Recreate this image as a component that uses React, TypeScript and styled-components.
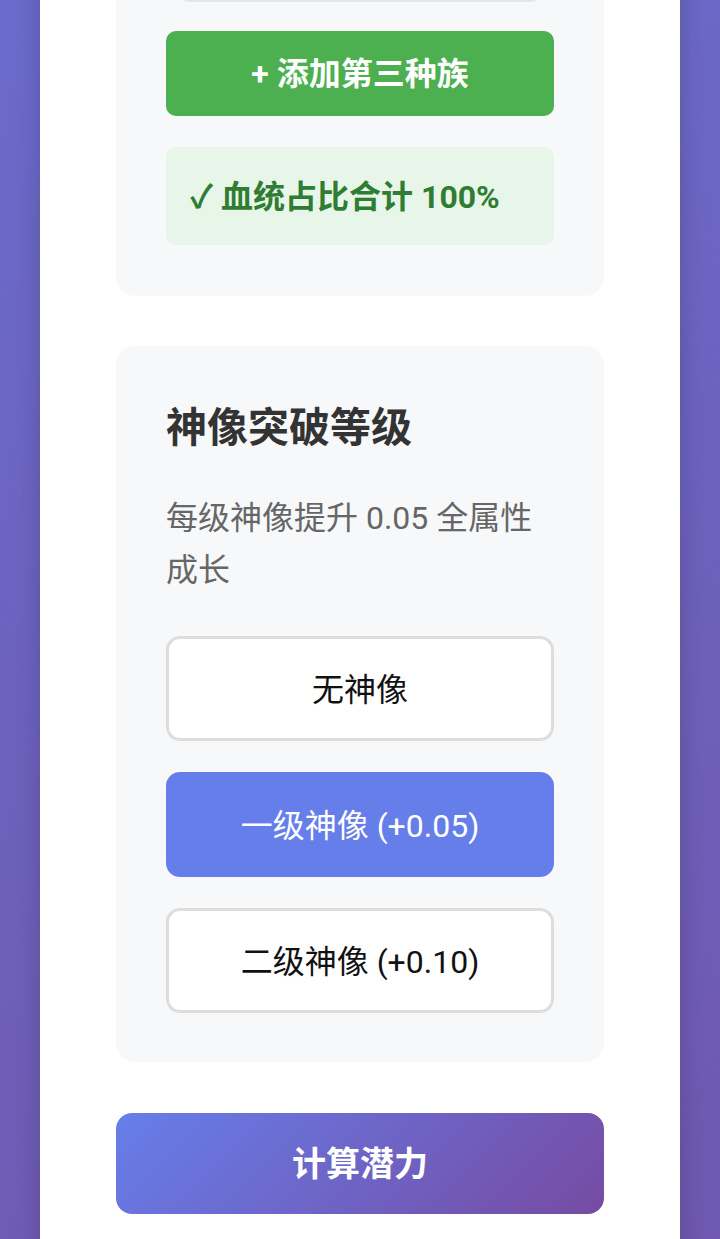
import styled, { createGlobalStyle } from "styled-components";

const GlobalStyle = createGlobalStyle`
  html, body {
    margin: 0;
    padding: 0;
  }
  body {
    min-height: 100vh;
    background: linear-gradient(160deg, #6a6bcb 0%, #7057ae 100%);
    font-family: Roboto, "Noto Sans CJK SC", sans-serif;
    overflow: hidden;
  }
`;

const Container = styled.div`
  width: 640px;
  margin: -120px auto 0;
  background: #ffffff;
  box-shadow: 0 0 24px rgba(0, 0, 0, 0.18);
  padding: 0 76px 120px;
  box-sizing: border-box;
  display: flex;
  flex-direction: column;
`;

const Card = styled.section<{ $bottom?: number }>`
  background: #f7f8fa;
  border-radius: 20px;
  padding: 50px 50px ${(p) => p.$bottom ?? 51}px;
  margin-bottom: 50px;
  display: flex;
  flex-direction: column;
`;

const RaceInput = styled.div`
  height: 72px;
  margin: 0 12px;
  box-sizing: border-box;
  border: 2px solid #e3e5e9;
  border-radius: 12px;
  background: #ffffff;
`;

const AddButton = styled.button`
  margin-top: 29px;
  height: 85px;
  padding: 0 0 5px;
  border: none;
  border-radius: 10px;
  background: #4caf50;
  color: #ffffff;
  font: 700 32px Roboto, "Noto Sans CJK SC", sans-serif;
`;

const Notice = styled.div`
  margin-top: 31px;
  height: 98px;
  box-sizing: border-box;
  padding: 0 24px 5px;
  display: flex;
  align-items: center;
  border-radius: 10px;
  background: #e8f5e9;
  color: #2e7d32;
  font: 700 32px Roboto, "Noto Sans CJK SC", sans-serif;
`;

const Title = styled.h3`
  margin: 5px 0 0;
  font: 700 41px/54px Roboto, "Noto Sans CJK SC", sans-serif;
  color: #333333;
`;

const Description = styled.p`
  margin: 37px 0 0;
  font: 400 32px/52px Roboto, "Noto Sans CJK SC", sans-serif;
  color: #666666;
`;

const Options = styled.div`
  margin-top: 40px;
  display: flex;
  flex-direction: column;
  gap: 31px;
`;

const Option = styled.button<{ $active?: boolean }>`
  height: 105px;
  padding: 0 0 4px;
  border: 3px solid ${(p) => (p.$active ? "#667eea" : "#dddddd")};
  border-radius: 14px;
  background: ${(p) => (p.$active ? "#667eea" : "#ffffff")};
  color: ${(p) => (p.$active ? "#ffffff" : "#111111")};
  font: 400 32px Roboto, "Noto Sans CJK SC", sans-serif;
`;

const CalcButton = styled.button`
  margin-top: 1px;
  height: 101px;
  padding: 0 0 5px;
  border: none;
  border-radius: 16px;
  background: linear-gradient(135deg, #667eea 0%, #764ba2 100%);
  color: #ffffff;
  font: 700 34px Roboto, "Noto Sans CJK SC", sans-serif;
`;

const levels = [
  { label: "无神像", active: false },
  { label: "一级神像 (+0.05)", active: true },
  { label: "二级神像 (+0.10)", active: false },
];

export default function App() {
  return (
    <>
      <GlobalStyle />
      <Container>
        <Card>
          <RaceInput />
          <AddButton>+ 添加第三种族</AddButton>
          <Notice>✓ 血统占比合计 100%</Notice>
        </Card>
        <Card $bottom={49}>
          <Title>神像突破等级</Title>
          <Description>每级神像提升 0.05 全属性成长</Description>
          <Options>
            {levels.map((l) => (
              <Option key={l.label} $active={l.active}>
                {l.label}
              </Option>
            ))}
          </Options>
        </Card>
        <CalcButton>计算潜力</CalcButton>
      </Container>
    </>
  );
}
